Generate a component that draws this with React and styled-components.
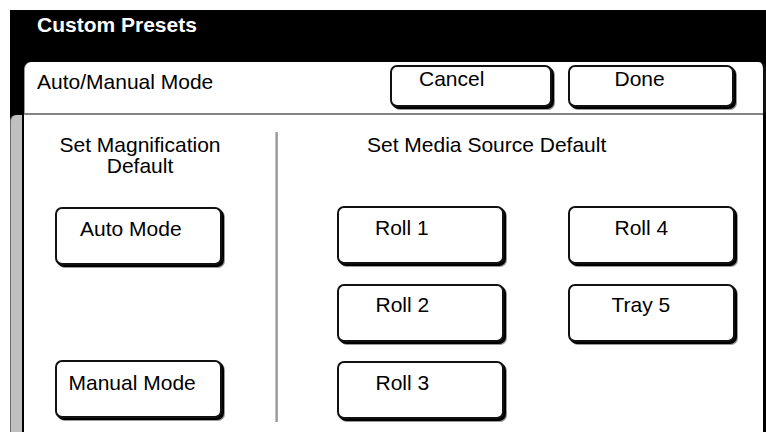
import React from 'react';
import styled, { createGlobalStyle } from 'styled-components';

const Global = createGlobalStyle`
  html, body {
    margin: 0;
    padding: 0;
    background: #fff;
  }
  body {
    font-family: "Liberation Sans", Arial, sans-serif;
    font-size: 21px;
    line-height: 24px;
    color: #000;
  }
`;

const Page = styled.div`
  padding: 10px 0 0 10px;
  width: 766px;
  height: 432px;
  box-sizing: border-box;
  overflow: hidden;
`;

const Screen = styled.div`
  width: 756px;
  height: 422px;
  background: #000;
  display: flex;
  flex-direction: column;
`;

const Header = styled.div`
  height: 52px;
  box-sizing: border-box;
  padding: 2.5px 0 0 27px;
  color: #fff;
  font-weight: bold;
  flex: none;
`;

const Body = styled.div`
  flex: 1;
  display: flex;
  min-height: 0;
`;

const LeftStrip = styled.div`
  width: 12px;
  display: flex;
  flex-direction: column;
  flex: none;
`;

const StripGap = styled.div`
  height: 53px;
  flex: none;
`;

const StripTab = styled.div`
  flex: 1;
  background: #c0c0c0;
  border-left: 1px solid #6a6a6a;
  border-top-left-radius: 6px;
`;

const Main = styled.div`
  flex: 1;
  display: flex;
  flex-direction: column;
  min-width: 0;
`;

const TabHead = styled.div`
  height: 51px;
  box-sizing: border-box;
  margin-left: 2px;
  background: #fff;
  border-left: 1px solid #9a9a9a;
  border-right: 3px solid #111;
  border-radius: 7px 7px 0 0;
  padding: 3px 29px 0 12px;
  display: flex;
  align-items: flex-start;
  gap: 16px;
  flex: none;
`;

const TabLabel = styled.div`
  flex: 1;
  margin-top: 4.5px;
`;

const Separator = styled.div`
  height: 2px;
  margin-left: 2px;
  background: #858585;
  border-right: 3px solid #000;
  flex: none;
`;

const Content = styled.div`
  flex: 1;
  background: #fff;
  border-left: 2px solid #000;
  border-right: 3px solid #000;
  display: flex;
  align-items: flex-start;
`;

const MagPanel = styled.div`
  width: 251px;
  box-sizing: border-box;
  padding: 19px 0 0 31px;
  display: flex;
  flex-direction: column;
  align-items: flex-start;
`;

const Heading = styled.div`
  width: ${p => p.$w || 'auto'};
  text-align: ${p => p.$align || 'center'};
  line-height: 21px;
  padding-left: ${p => p.$indent || 0}px;
`;

const Divider = styled.div`
  width: 3px;
  height: 290px;
  margin-top: 17px;
  border-radius: 1px 1px 0 0;
  background: linear-gradient(to right, #d6d6d6, #8c8c8c 60%, #bdbdbd);
  flex: none;
`;

const SourcePanel = styled.div`
  flex: 1;
  padding-top: 19px;
  display: flex;
  flex-direction: column;
`;

const RollGrid = styled.div`
  margin-top: 51px;
  padding-left: 59px;
  display: grid;
  grid-template-columns: 167px 167px;
  grid-auto-rows: 58px;
  column-gap: 64px;
  row-gap: 19.5px;
`;

const Key = styled.button`
  box-sizing: border-box;
  width: ${p => p.$w || 167}px;
  height: ${p => p.$h || 58}px;
  margin-top: ${p => p.$mt || 0}px;
  border: 2px solid #111;
  border-radius: 7px;
  background: #fff;
  box-shadow: 1px 1px 0 #000, 2px 2px 0 #000, 3px 3px 0 #9a9a9a;
  display: flex;
  align-items: flex-start;
  justify-content: flex-start;
  padding: ${p => p.$top ?? 7.5}px 0 0 ${p => p.$indent}px;
  font: 21px/24px "Liberation Sans", Arial, sans-serif;
  color: #000;
  white-space: nowrap;
  flex: none;
`;

const rolls = [
  { label: 'Roll 1', indent: 36 },
  { label: 'Roll 4', indent: 44.5 },
  { label: 'Roll 2', indent: 36.5 },
  { label: 'Tray 5', indent: 41.5 },
  { label: 'Roll 3', indent: 36.5 },
];

export default function App() {
  return (
    <Page>
      <Global />
      <Screen>
        <Header>Custom Presets</Header>
        <Body>
          <LeftStrip>
            <StripGap />
            <StripTab />
          </LeftStrip>
          <Main>
            <TabHead>
              <TabLabel>Auto/Manual Mode</TabLabel>
              <Key $w={162} $h={42} $top={0} $indent={27}>Cancel</Key>
              <Key $w={166} $h={42} $top={0} $indent={44.5}>Done</Key>
            </TabHead>
            <Separator />
            <Content>
              <MagPanel>
                <Heading $w="170px">Set Magnification<br />Default</Heading>
                <Key $mt={31} $indent={23}>Auto Mode</Key>
                <Key $mt={95} $top={8.5} $indent={11.5}>Manual Mode</Key>
              </MagPanel>
              <Divider />
              <SourcePanel>
                <Heading $align="left" $indent={89}>Set Media Source Default</Heading>
                <RollGrid>
                  {rolls.map(r => (
                    <Key key={r.label} $indent={r.indent}>{r.label}</Key>
                  ))}
                </RollGrid>
              </SourcePanel>
            </Content>
          </Main>
        </Body>
      </Screen>
    </Page>
  );
}
